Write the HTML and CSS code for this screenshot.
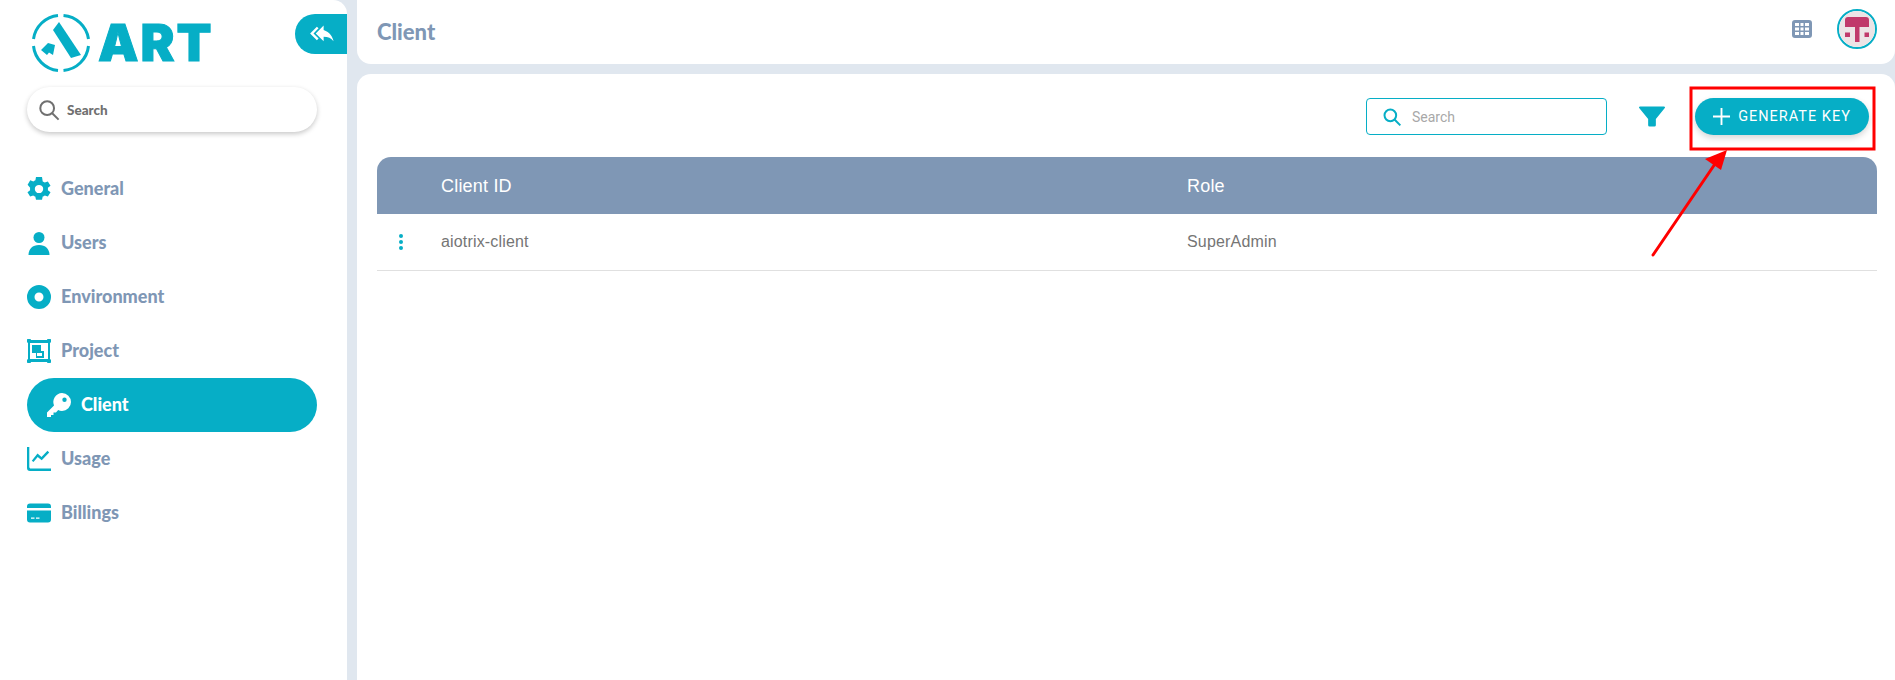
FILE: index.html
```html
<!DOCTYPE html>
<html lang="en">
<head>
<meta charset="utf-8">
<title>Client</title>
<link rel="stylesheet" href="styles.css">
</head>
<body>
<div class="app">
  <aside class="sidebar">
    <div class="brand-row">
      <div class="brand">
        <svg class="logo" viewBox="32 14 58 58">
          <g class="ring">
            <path d="M33.500 39A27.500 27.500 0 0 1 58 15.500"/>
            <path d="M63.500 15.500A27.500 27.500 0 0 1 88.500 39"/>
            <path d="M88.500 46A27.500 27.500 0 0 1 63.500 70.500"/>
            <path d="M58 70.500A27.500 27.500 0 0 1 33.500 46"/>
          </g>
          <path class="solid" d="M53 30L59 22L81 55L71 58Z"/>
          <path class="solid" d="M41 50L48 43L55 45L53 55L49 52.500L47 55Z"/>
        </svg>
        <span class="wordmark">ART</span>
      </div>
      <button class="collapse" aria-label="Collapse">
        <svg viewBox="0 0 24 24" class="collapse-icon"><path d="M7 5L1 11l6 6 1.500-1.500L4 11l4.500-4.500z"/><path d="M13 8V4L6 11l7 7v-4.100c4 0 6.800 1.300 8.800 4.100-.8-4-3.300-8-8.800-10z"/></svg>
      </button>
    </div>
    <label class="side-search">
      <svg viewBox="0 0 24 24" class="side-search-icon"><circle cx="10" cy="10" r="7.500"/><path d="M15.500 15.500L22.500 22.500"/></svg>
      <span>Search</span>
    </label>
    <nav class="nav">
      <a class="nav-item"><svg viewBox="2 1.700 20 20.600" preserveAspectRatio="none"><path d="M19.400 13a7.600 7.600 0 0 0 0-2l2.200-1.700-2.200-3.800-2.600 1a7.600 7.600 0 0 0-1.700-1L14.500 1.700h-5L9 4.500a7.600 7.600 0 0 0-1.700 1l-2.600-1-2.200 3.800L4.600 11a7.600 7.600 0 0 0 0 2l-2.200 1.700 2.200 3.800 2.600-1a7.600 7.600 0 0 0 1.700 1l.6 2.800h5l.6-2.800a7.600 7.600 0 0 0 1.700-1l2.600 1 2.200-3.800zM12 15.500a3.500 3.500 0 1 1 0-7 3.500 3.500 0 0 1 0 7z"/></svg><span>General</span></a>
      <a class="nav-item"><svg viewBox="0 0 24 24"><circle cx="12" cy="6.500" r="5.500"/><path d="M1.500 24c0-6 4-10 10.500-10s10.500 4 10.500 10z"/></svg><span>Users</span></a>
      <a class="nav-item"><svg viewBox="0 0 24 24"><path fill-rule="evenodd" d="M12 0a12 12 0 1 0 0 24 12 12 0 0 0 0-24zm0 7.500a4.500 4.500 0 1 1 0 9 4.500 4.500 0 0 1 0-9z"/></svg><span>Environment</span></a>
      <a class="nav-item"><svg viewBox="0 0 24 24"><path fill-rule="evenodd" d="M0 2a2 2 0 0 1 4-1h16a2 2 0 0 1 4 1 2 2 0 0 1-1 2v16a2 2 0 0 1 1 2 2 2 0 0 1-4 1H4a2 2 0 0 1-4-1 2 2 0 0 1 1-2V4a2 2 0 0 1-1-2zm3 2v16h18V4zm2 2h9v6h3v7H9v-5H5zm5 8v3h5v-3z"/></svg><span>Project</span></a>
      <a class="nav-item active"><svg viewBox="0 0 24 24"><path fill-rule="evenodd" d="M15 0a9 9 0 0 1 0 18c-1.500 0-2.700-.3-3.800-.9L9 19.500H6.500V22H4v2H0v-4.500l7-7A9 9 0 0 1 15 0zm2.500 4.500a2.200 2.200 0 1 0 0 4.400 2.200 2.200 0 0 0 0-4.400z"/></svg><span>Client</span></a>
      <a class="nav-item"><svg viewBox="0 0 24 24"><path d="M0 0h2.300v20c0 .8.700 1.500 1.500 1.500H24v2.500H3a3 3 0 0 1-3-3z"/><path d="M4.800 13.800L10.500 6.600l4 3.400 6-6.200 1.700 1.700-7.500 7.800-4-3.400-4.200 5.200z"/></svg><span>Usage</span></a>
      <a class="nav-item"><svg viewBox="0 0 24 24"><path fill-rule="evenodd" d="M3 2.500h18a3 3 0 0 1 3 3V7H0V5.500a3 3 0 0 1 3-3zM0 9.500h24v9a3 3 0 0 1-3 3H3a3 3 0 0 1-3-3zm4 7v1.300h3.500v-1.300zm5 0v1.300h3.500v-1.300z"/></svg><span>Billings</span></a>
    </nav>
  </aside>
  <div class="main">
    <header class="topbar">
      <h1 class="page-title">Client</h1>
      <div class="top-actions">
        <svg class="grid-icon" viewBox="0 0 20 18"><path fill-rule="evenodd" d="M3 0h14a3 3 0 0 1 3 3v12a3 3 0 0 1-3 3H3a3 3 0 0 1-3-3V3a3 3 0 0 1 3-3zm0 3v3h4V3zm5.500 0v3h3V3zM13 3v3h4V3zM3 7.500v3h4v-3zm5.500 0v3h3v-3zm4.500 0v3h4v-3zM3 12v3h4v-3zm5.500 0v3h3v-3zm4.500 0v3h4v-3z"/></svg>
        <div class="avatar">
          <svg viewBox="0 0 36 36"><circle cx="18" cy="18" r="18" fill="#ece4e6"/><path fill="#c0396b" d="M9 6h18a3 3 0 0 1 3 3v7H20.500v15H16V16H6V9a3 3 0 0 1 3-3zM6 21.500h5v4.500H6zm19.500 0h4.500v4.500h-4.500z"/></svg>
        </div>
      </div>
    </header>
    <section class="content">
      <div class="toolbar">
        <label class="search-box">
          <svg viewBox="0 0 24 24" class="search-icon"><circle cx="10" cy="10" r="7"/><path d="M15 15l7 7"/></svg>
          <span>Search</span>
        </label>
        <svg class="funnel" viewBox="0 0 27 21"><path d="M1 0h25a1 1 0 0 1 .8 1.600L17.500 13v6.500a1.500 1.500 0 0 1-1.500 1.500h-5a1.500 1.500 0 0 1-1.500-1.500V13L.2 1.600A1 1 0 0 1 1 0z"/></svg>
        <button class="generate">
          <svg viewBox="0 0 18 18" class="plus"><path d="M8 0h2v8h8v2h-8v8H8v-8H0V8h8z"/></svg>
          <span>GENERATE KEY</span>
        </button>
      </div>
      <div class="table">
        <div class="thead">
          <div class="cell-menu"></div>
          <div class="cell-id">Client ID</div>
          <div class="cell-role">Role</div>
        </div>
        <div class="row">
          <div class="cell-menu"><span class="dots"><i></i><i></i><i></i></span></div>
          <div class="cell-id">aiotrix-client</div>
          <div class="cell-role">SuperAdmin</div>
        </div>
      </div>
    </section>
  </div>
</div>
<svg class="annotation" viewBox="0 0 1895 680" aria-hidden="true">
  <rect x="1691" y="88" width="183" height="61" fill="none" stroke="#ff0000" stroke-width="3"/>
  <path d="M1653 255L1717 161" stroke="#ff0000" stroke-width="3" stroke-linecap="round" fill="none"/>
  <path d="M1727 150L1721 170L1705 159Z" fill="#ff0000"/>
</svg>
</body>
</html>
```
FILE: styles.css
```css
* { box-sizing: border-box; }
html, body { margin: 0; height: 100%; overflow: hidden; }
body { background: #e0e7ef; font-family: "Liberation Sans", Arial, sans-serif; }
.app { display: flex; gap: 10px; height: 680px; }
.sidebar { width: 347px; flex: none; background: #fff; border-radius: 0 14px 0 0; padding: 14px 0 0 27px; }
.brand-row { display: flex; justify-content: space-between; align-items: flex-start; height: 73px; }
.brand { display: flex; align-items: center; gap: 8px; margin-left: 5px; height: 58px; }
.logo { width: 58px; height: 58px; flex: none; }
.ring path { fill: none; stroke: #06aec6; stroke-width: 3; }
.solid { fill: #06aec6; }
.wordmark { font-family: Inter, sans-serif; font-weight: 900; font-size: 51px; line-height: 58px; color: #06aec6; letter-spacing: 2px; -webkit-text-stroke: 1px #06aec6; }
.collapse { width: 52px; height: 40px; border: 0; padding: 0 0 0 14px; background: #06aec6; border-radius: 20px 0 0 20px; display: flex; align-items: center; }
.collapse-icon { width: 27px; height: 27px; fill: #fff; }
.side-search { width: 290px; height: 45px; border-radius: 23px; background: #fff; box-shadow: 0 2px 5px rgba(0,0,0,.22); display: flex; align-items: center; padding-left: 11px; gap: 7px; font-family: Lato, sans-serif; font-weight: 900; font-size: 13.500px; color: #707070; }
.side-search-icon { width: 22px; height: 22px; fill: none; stroke: #707070; stroke-width: 2.200; }
.nav { margin-top: 30px; width: 290px; display: flex; flex-direction: column; }
.nav-item { height: 54px; display: flex; align-items: center; gap: 10px; font-family: Lato, sans-serif; font-weight: 900; font-size: 18px; color: #7f97b5; }
.nav-item span { padding-bottom: 2px; }
.nav-item svg { width: 24px; height: 24px; fill: #06aec6; flex: none; }
.nav-item.active { background: #06aec6; color: #fff; border-radius: 27px; padding-left: 20px; gap: 10px; }
.nav-item.active svg { fill: #fff; }
.main { flex: 1; display: flex; flex-direction: column; gap: 10px; min-width: 0; }
.topbar { height: 64px; flex: none; background: #fff; border-radius: 0 0 14px 14px; display: flex; align-items: center; justify-content: space-between; padding: 0 18px 6px 20px; }
.page-title { margin: 0; padding-top: 4px; font-family: Lato, sans-serif; font-weight: 900; font-size: 22px; color: #7f97b5; }
.top-actions { display: flex; align-items: center; gap: 25px; }
.grid-icon { width: 20px; height: 18px; fill: #7f97b5; }
.avatar { width: 40px; height: 40px; border: 2px solid #06aec6; border-radius: 50%; padding: 0; overflow: hidden; }
.avatar svg { display: block; width: 36px; height: 36px; }
.content { flex: 1; background: #fff; border-radius: 14px 14px 0 0; padding: 24px 18px 0 20px; }
.toolbar { display: flex; justify-content: flex-end; align-items: center; height: 37px; padding-right: 8px; }
.search-box { width: 241px; height: 37px; border: 1px solid #06aec6; border-radius: 4px; display: flex; align-items: center; padding-left: 15px; gap: 10px; font-size: 14px; color: #a8a8a8; font-family: Roboto, sans-serif; }
.search-icon { width: 20px; height: 20px; fill: none; stroke: #06aec6; stroke-width: 2.400; }
.funnel { width: 26px; height: 21px; fill: #06aec6; margin-left: 32px; }
.generate { margin-left: 30px; width: 174px; height: 37px; border: 0; border-radius: 19px; background: #06aec6; color: #fff; display: flex; align-items: center; justify-content: center; gap: 8px; font-family: Roboto, sans-serif; font-size: 14.500px; letter-spacing: 1px; padding: 0 0 1px; box-shadow: 0 3px 6px rgba(0,0,0,.16); }
.plus { width: 17px; height: 17px; fill: #fff; margin-top: 1px; }
.table { margin-top: 22px; }
.thead, .row { display: grid; grid-template-columns: 64px 746px 1fr; align-items: center; }
.thead { height: 57px; padding-top: 2px; background: #7f97b5; color: #fff; font-size: 18px; letter-spacing: .2px; border-radius: 14px 14px 0 0; }
.row { height: 57px; border-bottom: 1px solid #e0e0e0; color: #757575; font-size: 16px; letter-spacing: .17px; }
.cell-menu { display: flex; padding-left: 22px; }
.dots { display: flex; flex-direction: column; gap: 2px; }
.dots i { display: block; width: 4px; height: 4px; border-radius: 50%; background: #06aec6; }
.annotation { position: absolute; left: 0; top: 0; width: 1895px; height: 680px; pointer-events: none; }
```
